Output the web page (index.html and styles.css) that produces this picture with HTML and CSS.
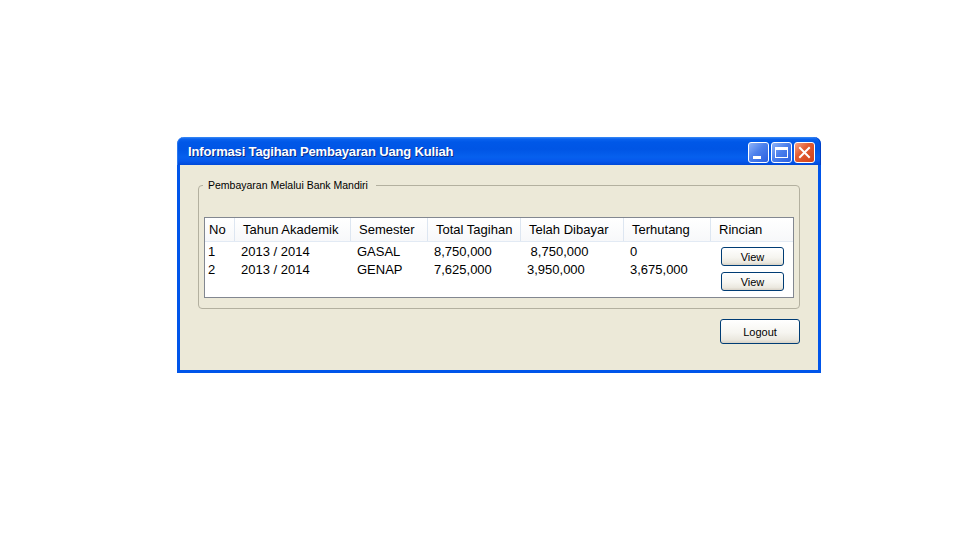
FILE: index.html
```html
<!DOCTYPE html>
<html>
<head>
<meta charset="utf-8">
<title>Informasi Tagihan Pembayaran Uang Kuliah</title>
<link rel="stylesheet" href="styles.css">
</head>
<body>
<div class="screen">
  <div class="window">
    <div class="titlebar">
      <span class="title">Informasi Tagihan Pembayaran Uang Kuliah</span>
      <div class="controls">
        <span class="cbtn blue">
          <svg width="19" height="19" viewBox="0 0 19 19"><rect x="4" y="13" width="8" height="3" fill="#fff"/></svg>
        </span>
        <span class="cbtn blue">
          <svg width="19" height="19" viewBox="0 0 19 19"><rect x="3.5" y="4.5" width="12" height="10" fill="none" stroke="#fff" stroke-width="1"/><rect x="3" y="4" width="13" height="3" fill="#fff"/></svg>
        </span>
        <span class="cbtn red">
          <svg width="19" height="19" viewBox="0 0 19 19"><path d="M5 5 L14 14 M14 5 L5 14" stroke="#fff" stroke-width="2" stroke-linecap="square"/></svg>
        </span>
      </div>
    </div>
    <div class="client">
      <fieldset class="group">
        <legend>Pembayaran Melalui Bank Mandiri</legend>
        <div class="table">
          <div class="thead">
            <div class="th first">No</div>
            <div class="th">Tahun Akademik</div>
            <div class="th">Semester</div>
            <div class="th">Total Tagihan</div>
            <div class="th">Telah Dibayar</div>
            <div class="th">Terhutang</div>
            <div class="th last">Rincian</div>
          </div>
          <div class="tbody">
            <div class="rows">
              <div class="td first">1</div>
              <div class="td">2013 / 2014</div>
              <div class="td">GASAL</div>
              <div class="td">8,750,000</div>
              <div class="td pre"> 8,750,000</div>
              <div class="td">0</div>
              <div class="td first">2</div>
              <div class="td">2013 / 2014</div>
              <div class="td">GENAP</div>
              <div class="td">7,625,000</div>
              <div class="td">3,950,000</div>
              <div class="td">3,675,000</div>
            </div>
            <div class="rincian">
              <button class="xpbtn view">View</button>
              <button class="xpbtn view">View</button>
            </div>
          </div>
        </div>
      </fieldset>
      <div class="actions">
        <button class="xpbtn logout">Logout</button>
      </div>
    </div>
  </div>
</div>
</body>
</html>
```
FILE: styles.css
```css
html, body {
  margin: 0;
  padding: 0;
  background: #ffffff;
}

.screen {
  padding: 137px 0 0 177px;
}

.window {
  width: 644px;
  font-family: "Liberation Sans", Arial, sans-serif;
}

.titlebar {
  height: 28px;
  box-sizing: border-box;
  border-radius: 7px 7px 0 0;
  background: linear-gradient(to bottom,
    #3d8cf5 0px, #0a62ee 2px, #0058e8 5px, #0055e5 12px,
    #0660ee 20px, #0658ec 24px, #0049d8 28px);
  display: flex;
  justify-content: space-between;
  align-items: flex-start;
  padding: 0 6px 0 11px;
  box-shadow: inset 1px 0 0 #2a78f0, inset -1px 0 0 #0040c8;
}

.title {
  color: #ffffff;
  font-family: "Liberation Sans", Arial, sans-serif;
  font-weight: bold;
  font-size: 13px;
  letter-spacing: -0.15px;
  line-height: 30px;
  text-shadow: 1px 1px 0 #0a2a8a;
}

.controls {
  display: flex;
  gap: 2px;
  padding-top: 5px;
}

.cbtn {
  width: 21px;
  height: 21px;
  box-sizing: border-box;
  border: 1px solid #ffffff;
  border-radius: 3px;
  display: block;
}

.cbtn svg {
  display: block;
}

.cbtn.blue {
  background: linear-gradient(135deg, #8fb3f8 0%, #4c80ec 45%, #2a5fe0 100%);
}

.cbtn.red {
  background: linear-gradient(135deg, #f4a48a 0%, #e35c32 40%, #d0421b 100%);
}

.client {
  height: 208px;
  box-sizing: border-box;
  border: 3px solid #0055ea;
  border-top: 0;
  background: #ece9d8;
  padding: 13px 18px 0 18px;
}

.group {
  margin: 0;
  padding: 0 5px 10px 5px;
  border: 1px solid #b3b09f;
  border-radius: 4px;
  min-width: 0;
}

.group legend {
  font-family: "Liberation Sans", Arial, sans-serif;
  font-size: 10.5px;
  line-height: 14px;
  color: #000;
  margin-left: -1px;
  padding: 0 8px 0 5px;
}

.table {
  margin-top: 25px;
  height: 81px;
  box-sizing: border-box;
  border: 1px solid #828790;
  background: #ffffff;
  font-size: 13px;
  color: #000;
}

.thead {
  display: grid;
  grid-template-columns: 30px 116px 77px 93px 103px 87px 82px;
  height: 24px;
  box-sizing: border-box;
  border-bottom: 1px solid #e2eaf4;
  background: linear-gradient(to bottom, #ffffff, #f7f8fa);
}

.th {
  border-right: 1px solid #dde6f1;
  padding: 1px 0 0 8px;
  line-height: 22px;
  white-space: nowrap;
}

.th.first {
  padding-left: 4px;
}

.th.last {
  border-right: 0;
}

.tbody {
  display: flex;
}

.rows {
  display: grid;
  grid-template-columns: 30px 116px 77px 93px 103px 87px;
  grid-auto-rows: 18px;
  padding-top: 1px;
}

.td {
  padding-left: 6px;
  line-height: 18px;
  white-space: nowrap;
}

.td.first {
  padding-left: 3px;
}

.td.pre {
  white-space: pre;
}

.rincian {
  display: flex;
  flex-direction: column;
  gap: 6px;
  padding: 5px 0 0 10px;
}

.xpbtn {
  margin: 0;
  padding: 0;
  box-sizing: border-box;
  border: 1px solid #003c74;
  border-radius: 3px;
  background: linear-gradient(to bottom, #ffffff 0%, #f6f5f0 55%, #ebe8df 85%, #d8d2c6 100%);
  font-family: "Liberation Sans", Arial, sans-serif;
  font-size: 11px;
  color: #000;
  text-align: center;
}

.view {
  width: 63px;
  height: 19px;
  line-height: 17px;
  padding-top: 1px;
}

.actions {
  display: flex;
  justify-content: flex-end;
  padding-top: 10px;
}

.logout {
  width: 80px;
  height: 25px;
  line-height: 23px;
  padding-top: 1px;
}
```
